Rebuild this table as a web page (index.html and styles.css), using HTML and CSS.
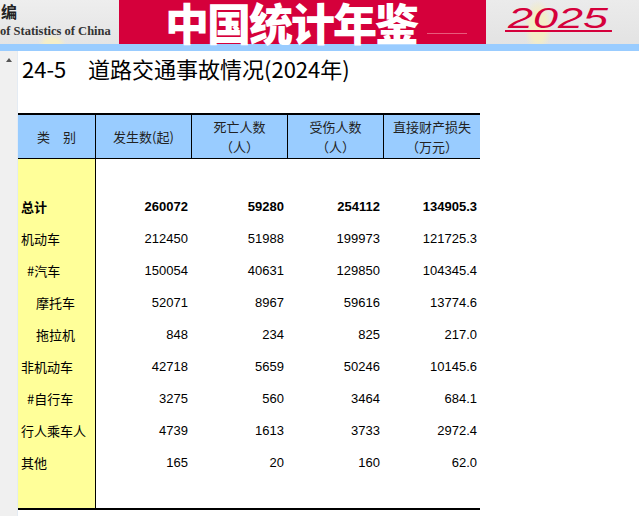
FILE: index.html
```html
<!DOCTYPE html>
<html lang="zh-CN">
<head>
<meta charset="utf-8">
<title>24-5 道路交通事故情况(2024年)</title>
<link rel="stylesheet" href="styles.css">
</head>
<body>
<div class="banner">
  <div class="b-left">
    <div class="b-bian">编</div>
    <div class="b-en">of Statistics of China</div>
  </div>
  <div class="b-red">
    <span class="b-title">中国统计年鉴</span>
    <span class="b-line"></span>
  </div>
  <div class="b-right">
    <span class="b-year">2025</span>
  </div>
</div>
<div class="bluebar"></div>
<div class="main">
  <div class="gutter"><span class="arrow"></span></div>
  <div class="content">
    <h1 class="title"><span class="t-num">24-5</span><span class="t-text">道路交通事故情况(2024年)</span></h1>
    <div class="tbl">
      <div class="thead">
        <div class="hc">类　别</div>
        <div class="hc bl">发生数(起)</div>
        <div class="hc bl"><span>死亡人数</span><span>（人）</span></div>
        <div class="hc bl"><span>受伤人数</span><span>（人）</span></div>
        <div class="hc bl"><span>直接财产损失</span><span>（万元）</span></div>
      </div>
      <div class="tbody">
        <div class="row bold"><div class="lbl">总计</div><div class="num">260072</div><div class="num">59280</div><div class="num">254112</div><div class="num">134905.3</div></div>
        <div class="row"><div class="lbl">机动车</div><div class="num">212450</div><div class="num">51988</div><div class="num">199973</div><div class="num">121725.3</div></div>
        <div class="row"><div class="lbl ind1">#汽车</div><div class="num">150054</div><div class="num">40631</div><div class="num">129850</div><div class="num">104345.4</div></div>
        <div class="row"><div class="lbl ind2">摩托车</div><div class="num">52071</div><div class="num">8967</div><div class="num">59616</div><div class="num">13774.6</div></div>
        <div class="row"><div class="lbl ind2">拖拉机</div><div class="num">848</div><div class="num">234</div><div class="num">825</div><div class="num">217.0</div></div>
        <div class="row"><div class="lbl">非机动车</div><div class="num">42718</div><div class="num">5659</div><div class="num">50246</div><div class="num">10145.6</div></div>
        <div class="row"><div class="lbl ind1">#自行车</div><div class="num">3275</div><div class="num">560</div><div class="num">3464</div><div class="num">684.1</div></div>
        <div class="row"><div class="lbl">行人乘车人</div><div class="num">4739</div><div class="num">1613</div><div class="num">3733</div><div class="num">2972.4</div></div>
        <div class="row"><div class="lbl">其他</div><div class="num">165</div><div class="num">20</div><div class="num">160</div><div class="num">62.0</div></div>
      </div>
    </div>
  </div>
</div>
</body>
</html>
```
FILE: styles.css
```css
html, body {
  margin: 0;
  padding: 0;
  background: #ffffff;
}
body {
  width: 639px;
  height: 516px;
  overflow: hidden;
  font-family: "Noto Sans CJK SC", "Liberation Sans", sans-serif;
  color: #000;
}

/* ---------- banner ---------- */
.banner {
  display: flex;
  height: 44px;
}
.b-left {
  width: 119px;
  background:
    radial-gradient(ellipse 14px 10px at 52px 44px, #f4eec8 0, #f4eec8 50%, rgba(244,238,200,0) 100%),
    linear-gradient(#eeeeee, #e4e4e4);
}
.b-bian {
  margin-top: 2px;
  padding-left: 1px;
  font-size: 16px;
  line-height: 18px;
  font-weight: 700;
  color: #222;
}
.b-en {
  margin-top: 4px;
  font-family: "Liberation Serif", serif;
  font-size: 12.5px;
  line-height: 14px;
  font-weight: 700;
  color: #333;
  white-space: nowrap;
}
.b-red {
  width: 367px;
  background: #d5003b;
  display: flex;
  align-items: flex-start;
  padding-left: 46px;
  box-sizing: border-box;
}
.b-title {
  font-size: 44px;
  line-height: 44px;
  font-weight: 900;
  letter-spacing: -2px;
  color: #ffffff;
  white-space: nowrap;
}
.b-line {
  margin-top: 33px;
  margin-left: 10px;
  width: 40px;
  height: 1px;
  background: #e85a7c;
}
.b-right {
  flex: 1;
  background:
    radial-gradient(ellipse 14px 26px at 52px 26px, #f3edc6 0, #f3edc6 55%, rgba(243,237,198,0) 100%),
    linear-gradient(#ebebeb, #e3e3e3);
  padding-left: 19px;
}
.b-year {
  display: inline-block;
  margin-top: 6px;
  padding: 0 2px;
  font-family: "Liberation Sans", sans-serif;
  font-style: italic;
  font-size: 29px;
  line-height: 24px;
  color: #d5003b;
  border-bottom: 2px solid #d5003b;
  transform: scaleX(1.55);
  transform-origin: left top;
}
.bluebar {
  height: 7px;
  background: #99ccff;
}

/* ---------- main area ---------- */
.main {
  display: flex;
  height: 465px;
}
.gutter {
  width: 17px;
  background: #f0f0f0;
  border-right: 1px solid #e4ebf3;
}
.arrow {
  display: block;
  width: 0;
  height: 0;
  margin: 7px 0 0 6px;
  border-left: 3.5px solid transparent;
  border-right: 3.5px solid transparent;
  border-bottom: 4px solid #555;
}
.content {
  flex: 1;
}
.title {
  display: flex;
  margin: 2px 0 0 0;
  padding-left: 4px;
  font-size: 22px;
  line-height: 30px;
  font-weight: 400;
  white-space: nowrap;
}
.t-num {
  width: 66px;
}

/* ---------- table ---------- */
.tbl {
  margin-top: 30px;
  width: 462px;
  border-top: 2px solid #000;
  border-bottom: 2px solid #000;
}
.thead,
.row {
  display: grid;
  grid-template-columns: 77px 96px 96px 96px 97px;
}
.thead {
  height: 43px;
  background: #99ccff;
  border-bottom: 1px solid #000;
}
.hc {
  display: flex;
  flex-direction: column;
  justify-content: center;
  align-items: center;
  font-size: 13px;
  line-height: 20px;
  color: #222;
  white-space: nowrap;
}
.bl {
  border-left: 1px solid #000;
}
.tbody {
  padding: 32px 0 29px 0;
  background: linear-gradient(to right, #ffff99 0, #ffff99 77px, #000 77px, #000 78px, #ffffff 78px);
}
.row {
  height: 32px;
  line-height: 32px;
  font-size: 13px;
}
.lbl {
  padding-left: 3px;
  white-space: nowrap;
}
.ind1 {
  padding-left: 9px;
}
.ind2 {
  padding-left: 18px;
}
.num {
  text-align: right;
  padding-right: 3px;
  font-family: "Liberation Sans", sans-serif;
}
.bold {
  font-weight: 700;
}
```
